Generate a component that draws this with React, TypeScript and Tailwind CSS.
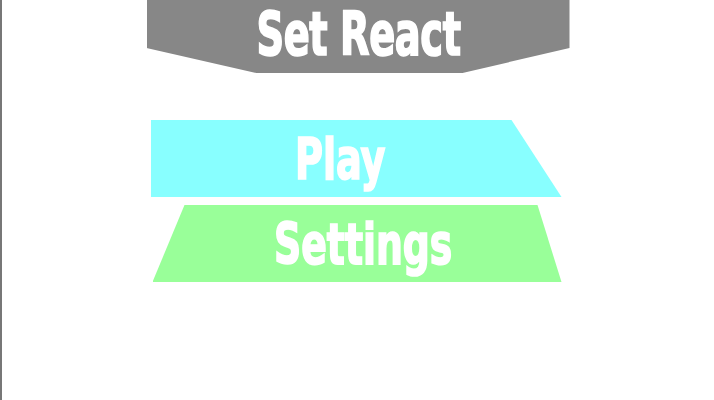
export default function App() {
  const font =
    "font-['Liberation_Sans_Narrow','DejaVu_Sans_Condensed',sans-serif] font-bold text-white leading-none [-webkit-text-stroke:1.5px_white]";

  return (
    <div className="h-[400px] w-full border-l-2 border-[#777] bg-white">
      <div className="mx-auto flex w-[423px] flex-col">
        <header className="flex h-[73px] w-[423px] justify-center bg-[#878787] pt-[4px] [clip-path:polygon(0_0,100%_0,100%_48px,316px_73px,110px_73px,0_48px)]">
          <h1 className={`${font} origin-top scale-x-[0.82] scale-y-[1.15] text-[52px] tracking-[-0.5px]`}>Set React</h1>
        </header>

        <button className="mt-[47px] ml-[4px] flex h-[77px] w-[411px] items-center bg-[#88ffff] pl-[136px] [clip-path:polygon(0_0,361px_0,100%_100%,0_100%)]">
          <span className={`${font} scale-x-[0.85] scale-y-[1.15] text-[50px]`}>Play</span>
        </button>

        <button className="mt-[8px] ml-[6px] flex h-[77px] w-[409px] items-center bg-[#99ff99] pl-[104px] [clip-path:polygon(32px_0,385px_0,100%_100%,0_100%)]">
          <span className={`${font} scale-x-[0.84] scale-y-[1.15] text-[50px]`}>Settings</span>
        </button>
      </div>
    </div>
  );
}
